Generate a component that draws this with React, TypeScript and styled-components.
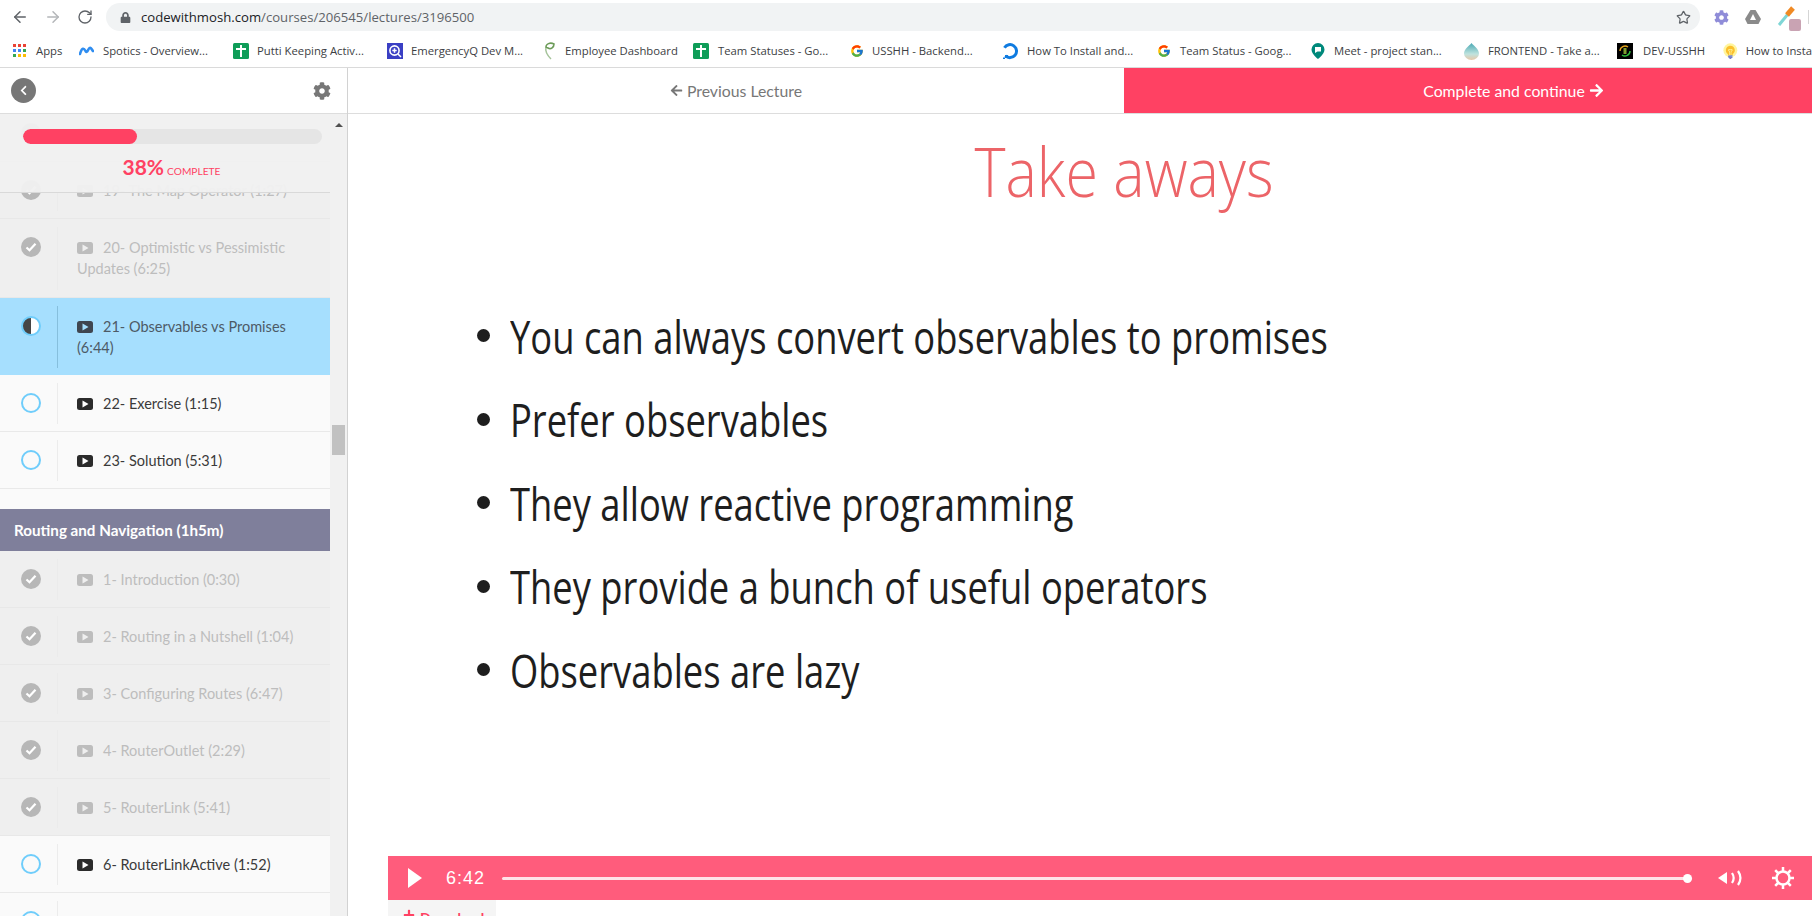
import styled, { createGlobalStyle } from 'styled-components';
import { ArrowLeft, ArrowRight, RotateCw, Star } from 'lucide-react';
import { FaArrowLeft, FaArrowRight, FaChevronLeft, FaCog, FaLock, FaPlus } from 'react-icons/fa';
import { FcGoogle, FcIdea } from 'react-icons/fc';

const GlobalStyle = createGlobalStyle`
  html, body {
    margin: 0;
    padding: 0;
    height: 100%;
    overflow: hidden;
    background: #fff;
  }
  * { box-sizing: border-box; }
`;

const Page = styled.div`
  width: 1812px;
  height: 916px;
  display: flex;
  flex-direction: column;
  overflow: hidden;
  font-family: "Lato", "Open Sans", sans-serif;
`;

/* browser chrome */
const Toolbar = styled.div`
  height: 34px;
  display: flex;
  align-items: center;
  background: #fff;
  flex: none;
`;

const NavIcons = styled.div`
  width: 106px;
  display: flex;
  align-items: center;
  gap: 15px;
  padding-left: 11px;
  color: #5f6368;
  flex: none;
`;

const AddressBar = styled.div`
  width: 1594px;
  height: 28px;
  display: flex;
  align-items: center;
  padding: 0 9px 0 14px;
  background: #f1f3f4;
  border-radius: 14px;
  color: #5f6368;
  flex: none;
`;

const Url = styled.div`
  margin-left: 10px;
  flex: 1;
  font: 13.15px "Open Sans", sans-serif;
  color: #5f6368;
  span { color: #202124; }
`;

const Extensions = styled.div`
  flex: 1;
  display: flex;
  align-items: center;
  gap: 16px;
  padding-left: 14px;
`;

const Eyedropper = styled.div`
  position: relative;
  width: 24px;
  height: 28px;
`;

const Swatch = styled.div`
  position: absolute;
  right: 0;
  bottom: 0;
  width: 12px;
  height: 12px;
  border-radius: 2px;
  background: #c9a3b3;
`;

const Separator = styled.div`
  width: 1px;
  height: 14px;
  margin-left: -9px;
  background: #d5d5d5;
`;

const Bookmarks = styled.div`
  height: 34px;
  display: flex;
  align-items: center;
  padding-left: 13px;
  border-bottom: 1px solid #dadada;
  flex: none;
  overflow: hidden;
`;

const Bookmark = styled.div<{ $w: number; $gap: number }>`
  width: ${p => p.$w}px;
  flex: none;
  display: flex;
  align-items: center;
  gap: ${p => p.$gap}px;
  font: 11.3px "Open Sans", sans-serif;
  color: #3c4043;
  white-space: nowrap;
`;

/* page */
const Body = styled.div`
  flex: 1;
  display: flex;
  min-height: 0;
`;

const Sidebar = styled.aside`
  width: 348px;
  flex: none;
  display: flex;
  flex-direction: column;
  border-right: 1px solid #d2d2d2;
  background: #fff;
`;

const SideHead = styled.div`
  height: 46px;
  flex: none;
  display: flex;
  align-items: center;
  justify-content: space-between;
  padding: 0 16px 0 11px;
  border-bottom: 1px solid #ddd;
  color: #777;
`;

const BackButton = styled.div`
  width: 25px;
  height: 25px;
  border-radius: 50%;
  background: #777;
  color: #fff;
  display: flex;
  align-items: center;
  justify-content: center;
  font-size: 11px;
`;

const ScrollArea = styled.div`
  flex: 1;
  min-height: 0;
  display: flex;
  position: relative;
  overflow: hidden;
`;

const Lessons = styled.div`
  width: 330px;
  flex: none;
  margin-top: -9px;
  background: #fafafa;
`;

const ProgressPanel = styled.div`
  position: absolute;
  top: 0;
  left: 0;
  width: 330px;
  height: 79px;
  padding: 15px 8px 0 23px;
  background: rgba(240, 240, 240, 0.96);
  border-bottom: 1px solid #d9d9d9;
`;

const Track = styled.div`
  height: 15px;
  border-radius: 8px;
  background: #e5e5e5;
  overflow: hidden;
`;

const Fill = styled.div<{ $pct: number }>`
  width: ${p => p.$pct}%;
  height: 100%;
  border-radius: 8px;
  background: #ff4163;
`;

const ProgressLabel = styled.div`
  display: flex;
  align-items: baseline;
  justify-content: center;
  gap: 3px;
  margin-top: 10px;
  padding-right: 2px;
  color: #ff4163;
  font-size: 10.2px;
`;

const Percent = styled.span`
  font-size: 21px;
  font-weight: 700;
`;

const Scrollbar = styled.div`
  flex: 1;
  background: #f1f1f1;
  display: flex;
  flex-direction: column;
  align-items: center;
`;

const ScrollUp = styled.div`
  width: 0;
  height: 0;
  margin-top: 9px;
  border-left: 4px solid transparent;
  border-right: 4px solid transparent;
  border-bottom: 4px solid #505050;
`;

const ScrollThumb = styled.div`
  width: 13px;
  height: 30px;
  margin-top: 298px;
  background: #c1c1c1;
`;

type RowState = 'done' | 'active' | 'todo';

const Row = styled.div<{ $state: RowState; $h: number }>`
  height: ${p => p.$h}px;
  display: flex;
  background: ${p => (p.$state === 'done' ? '#efefef' : p.$state === 'active' ? '#a6dffe' : '#fafafa')};
  border-bottom: ${p => (p.$state === 'active' ? '0' : `1px solid ${p.$state === 'done' ? '#e8e8e8' : '#e9e9e9'}`)};
  color: ${p => (p.$state === 'done' ? '#bdbdbd' : p.$state === 'active' ? '#4d5a66' : '#3a3a3a')};
`;

const StatusCell = styled.div<{ $state: RowState }>`
  width: 58px;
  height: calc(100% - 15px);
  margin-top: 8px;
  flex: none;
  padding: 10px 0 0 21px;
  border-right: 1px solid ${p => (p.$state === 'active' ? '#86bfdd' : p.$state === 'done' ? '#ebebeb' : '#ececec')};
`;

const RingIcon = styled.div`
  width: 20px;
  height: 20px;
  border-radius: 50%;
  border: 2px solid #6fcdfb;
`;

const DoneIcon = styled.div`
  width: 20px;
  height: 20px;
  border-radius: 50%;
  background: #b7b7b7;
  color: #fff;
  display: flex;
  align-items: center;
  justify-content: center;
`;

const HalfIcon = styled.div`
  width: 20px;
  height: 20px;
  border-radius: 50%;
  border: 2px solid #6fcdfb;
  background: linear-gradient(90deg, #454545 50%, #fff 50%);
`;

const LessonTitle = styled.div`
  flex: 1;
  padding: 18px 16px 0 19px;
  font-size: 14.5px;
  line-height: 21px;
`;

const PlayBadge = styled.svg`
  width: 16px;
  height: 12px;
  margin-right: 10px;
  vertical-align: -1px;
`;

const SectionGap = styled.div`
  height: 20px;
  background: #fafafa;
`;

const SectionHead = styled.div`
  height: 42px;
  display: flex;
  align-items: center;
  padding-left: 14px;
  background: #7f7f9b;
  color: #fff;
  font-size: 15.2px;
  font-weight: 700;
`;

const Main = styled.main`
  flex: 1;
  min-width: 0;
  display: flex;
  flex-direction: column;
  overflow: hidden;
`;

const LectureNav = styled.div`
  height: 46px;
  flex: none;
  display: flex;
  border-bottom: 1px solid #ddd;
`;

const PrevLink = styled.div`
  width: 776px;
  flex: none;
  display: flex;
  align-items: center;
  justify-content: center;
  gap: 4px;
  color: #777;
  font-size: 15.8px;
`;

const NextButton = styled.div`
  flex: 1;
  display: flex;
  align-items: center;
  justify-content: center;
  gap: 4px;
  padding-left: 91px;
  background: #ff4163;
  color: #fff;
  font-size: 15.8px;
`;

const Slide = styled.section`
  height: 742px;
  flex: none;
  padding: 21px 0 0 162px;
  overflow: hidden;
`;

const SlideTitle = styled.h1`
  margin: 0;
  padding-left: 28px;
  width: 1200px;
  text-align: center;
  font: 300 68px/72px "Open Sans", sans-serif;
  color: #ec6468;
  transform: scaleX(0.87);
  transform-origin: 614px 0;
`;

const Points = styled.ul`
  list-style: none;
  margin: 87px 0 0 -33px;
  padding: 0;
`;

const Point = styled.li`
  height: 83.5px;
  display: flex;
  align-items: center;
  gap: 20px;
  font: 400 46px/56px "Open Sans", sans-serif;
  color: #1e1e1e;
  white-space: nowrap;
`;

const Dot = styled.span`
  width: 13px;
  height: 13px;
  border-radius: 50%;
  background: #1e1e1e;
  flex: none;
`;

const PointText = styled.span`
  transform: scaleX(0.79);
  transform-origin: 0 50%;
`;

const Player = styled.div`
  height: 44px;
  margin-left: 40px;
  flex: none;
  display: flex;
  align-items: center;
  padding-left: 20px;
  background: #ff5c7c;
  color: #fff;
`;

const Time = styled.div`
  width: 56px;
  margin-left: 24px;
  font: 18px "Liberation Sans", sans-serif;
  letter-spacing: 1px;
  flex: none;
`;

const Scrub = styled.div`
  width: 1190px;
  height: 3px;
  border-radius: 2px;
  background: #ffe3e8;
  position: relative;
  flex: none;
`;

const Knob = styled.div`
  position: absolute;
  right: 0;
  top: -3px;
  width: 9px;
  height: 9px;
  border-radius: 50%;
  background: #fff;
`;

const VolumeIcon = styled.svg`
  width: 26px;
  height: 20px;
  margin-left: 26px;
  flex: none;
`;

const SettingsIcon = styled.svg`
  width: 24px;
  height: 24px;
  margin-left: 27px;
  flex: none;
`;

const Download = styled.div`
  width: 108px;
  height: 30px;
  margin-left: 40px;
  padding: 9px 0 0 15px;
  flex: none;
  display: flex;
  align-items: flex-start;
  gap: 5px;
  background: #f5f5f5;
  color: #ff4163;
  font-size: 14px;
  font-weight: 700;
`;

const GridIcon = () => (
  <svg width="13" height="13" viewBox="0 0 13 13">
    {['#ea4335', '#ea4335', '#ea4335', '#4285f4', '#4285f4', '#34a853', '#34a853', '#fbbc05', '#fbbc05'].map((c, i) => (
      <rect key={i} x={(i % 3) * 5} y={Math.floor(i / 3) * 5} width="3" height="3" fill={c} />
    ))}
  </svg>
);

const SpoticsIcon = () => (
  <svg width="15" height="10" viewBox="0 0 15 10">
    <path d="M1 8 C3 1 5 2 6.500 5 C8 8 9 3 10.500 2 C12 1 13 4 14 5" fill="none" stroke="#2f8df0" strokeWidth="2.600" strokeLinecap="round" />
  </svg>
);

const SheetIcon = () => (
  <svg width="16" height="16" viewBox="0 0 16 16">
    <rect width="16" height="16" rx="1.500" fill="#0f9d58" />
    <path d="M7 2h2v3h4v2H9v7H7V7H3V5h4z" fill="#fff" />
  </svg>
);

const EmergencyIcon = () => (
  <svg width="16" height="16" viewBox="0 0 16 16">
    <rect width="16" height="16" fill="#3a3fc4" />
    <circle cx="7.500" cy="7.500" r="4.600" fill="none" stroke="#fff" strokeWidth="1.600" />
    <path d="M7.500 5.300v4.400M5.300 7.500h4.400M11 11l3 3" stroke="#fff" strokeWidth="1.500" />
  </svg>
);

const SproutIcon = () => (
  <svg width="13" height="18" viewBox="0 0 13 18">
    <path d="M8 17C4 13 2 9 3 5" fill="none" stroke="#a5c39a" strokeWidth="1.500" />
    <path d="M3 5C3 2 7 0 11 2C11 5 8 8 5 6Z" fill="none" stroke="#6d9c59" strokeWidth="1.600" />
  </svg>
);

const CloudIcon = () => (
  <svg width="18" height="18" viewBox="0 0 18 18">
    <path d="M8 15.500A6.500 6.500 0 1 0 2.600 9.500" transform="rotate(35 9 9)" fill="none" stroke="#0f7be0" strokeWidth="3" />
    <path d="M4 13h3v3H4zM2 15.500h2V17H2z" fill="#0f7be0" />
  </svg>
);

const MeetIcon = () => (
  <svg width="14" height="18" viewBox="0 0 14 18">
    <path d="M7 1a6.500 6.500 0 0 1 6.500 6.500C13.500 12 7 17 7 17S.5 12 .5 7.500A6.500 6.500 0 0 1 7 1z" fill="#00897b" />
    <path d="M4 5h6v4.500H6.500L4 11z" fill="#fff" />
  </svg>
);

const DropIcon = () => (
  <svg width="17" height="18" viewBox="0 0 17 18">
    <defs>
      <linearGradient id="dropFill" x1="0" y1="0" x2="0" y2="1">
        <stop offset="0" stopColor="#4aa9b4" />
        <stop offset="0.65" stopColor="#bfe3de" />
        <stop offset="1" stopColor="#e8c7a8" />
      </linearGradient>
    </defs>
    <path d="M8.500 1C11 4 16 7 16 11.500A7.500 6.500 0 0 1 1 11.500C1 7 6 4 8.500 1z" fill="url(#dropFill)" />
  </svg>
);

const DevIcon = () => (
  <svg width="16" height="16" viewBox="0 0 16 16">
    <rect width="16" height="16" fill="#000" />
    <path d="M3 8a5 5 0 0 1 8-4" fill="none" stroke="#e5a21b" strokeWidth="1.400" />
    <path d="M13 8a5 5 0 0 1-8 4" fill="none" stroke="#2fbf3a" strokeWidth="1.400" />
    <rect x="6.500" y="5" width="3" height="6" fill="#7d9c2e" />
  </svg>
);

const bookmarks = [
  { label: 'Apps', icon: <GridIcon />, w: 66, gap: 10 },
  { label: 'Spotics - Overview...', icon: <SpoticsIcon />, w: 154, gap: 9 },
  { label: 'Putti Keeping Activ...', icon: <SheetIcon />, w: 154, gap: 8 },
  { label: 'EmergencyQ Dev M...', icon: <EmergencyIcon />, w: 156, gap: 8 },
  { label: 'Employee Dashboard', icon: <SproutIcon />, w: 150, gap: 9 },
  { label: 'Team Statuses - Go...', icon: <SheetIcon />, w: 157, gap: 9 },
  { label: 'USSHH - Backend...', icon: <FcGoogle size={14} />, w: 151, gap: 8 },
  { label: 'How To Install and...', icon: <CloudIcon />, w: 156, gap: 8 },
  { label: 'Team Status - Goog...', icon: <FcGoogle size={14} />, w: 154, gap: 9 },
  { label: 'Meet - project stan...', icon: <MeetIcon />, w: 152, gap: 9 },
  { label: 'FRONTEND - Take a...', icon: <DropIcon />, w: 154, gap: 8 },
  { label: 'DEV-USSHH', icon: <DevIcon />, w: 105, gap: 10 },
  { label: 'How to Insta', icon: <FcIdea size={18} />, w: 90, gap: 7 },
];

type Lesson = { id: string; title?: string; state: RowState; h?: number };

// row 18 sits behind the progress panel and row 7 starts at the fold: only their icons show
const firstLessons: Lesson[] = [
  { id: 's18', state: 'done' },
  { id: 's19', title: '19- The Map Operator (1:27)', state: 'done' },
  { id: 's20', title: '20- Optimistic vs Pessimistic Updates (6:25)', state: 'done', h: 79 },
  { id: 's21', title: '21- Observables vs Promises (6:44)', state: 'active', h: 77 },
  { id: 's22', title: '22- Exercise (1:15)', state: 'todo' },
  { id: 's23', title: '23- Solution (5:31)', state: 'todo' },
];

const routingLessons: Lesson[] = [
  { id: 'r1', title: '1- Introduction (0:30)', state: 'done' },
  { id: 'r2', title: '2- Routing in a Nutshell (1:04)', state: 'done' },
  { id: 'r3', title: '3- Configuring Routes (6:47)', state: 'done' },
  { id: 'r4', title: '4- RouterOutlet (2:29)', state: 'done' },
  { id: 'r5', title: '5- RouterLink (5:41)', state: 'done' },
  { id: 'r6', title: '6- RouterLinkActive (1:52)', state: 'todo' },
  { id: 'r7', state: 'todo' },
];

const points = [
  'You can always convert observables to promises',
  'Prefer observables',
  'They allow reactive programming',
  'They provide a bunch of useful operators',
  'Observables are lazy',
];

function StatusIcon({ state }: { state: RowState }) {
  if (state === 'active') return <HalfIcon />;
  if (state === 'todo') return <RingIcon />;
  return (
    <DoneIcon>
      <svg width="12" height="10" viewBox="0 0 12 10">
        <path d="M1.500 5.500L4.500 8.300L10.500 1.700" fill="none" stroke="#fff" strokeWidth="2.200" />
      </svg>
    </DoneIcon>
  );
}

function LessonRow({ lesson }: { lesson: Lesson }) {
  const { state } = lesson;
  const badge = state === 'done' ? '#bdbdbd' : state === 'active' ? '#3f4650' : '#2b2b2b';
  const arrow = state === 'done' ? '#efefef' : state === 'active' ? '#a6dffe' : '#fff';
  return (
    <Row $state={state} $h={lesson.h ?? 57}>
      <StatusCell $state={state}>
        <StatusIcon state={state} />
      </StatusCell>
      <LessonTitle>
        <PlayBadge viewBox="0 0 16 12">
          <rect width="16" height="12" rx="2.500" fill={badge} />
          <path d="M5.500 2.500L11.500 6L5.500 9.500z" fill={arrow} />
        </PlayBadge>
        {lesson.title}
      </LessonTitle>
    </Row>
  );
}

function App() {
  return (
    <Page>
      <GlobalStyle />
      <Toolbar>
        <NavIcons>
          <ArrowLeft size={18} />
          <ArrowRight size={18} color="#b4b6b9" />
          <RotateCw size={16} />
        </NavIcons>
        <AddressBar>
          <FaLock size={11} />
          <Url><span>codewithmosh.com</span>/courses/206545/lectures/3196500</Url>
          <Star size={15} />
        </AddressBar>
        <Extensions>
          <FaCog size={15} color="#8f8cd8" />
          <svg width="16" height="14" viewBox="0 0 16 14">
            <path d="M5.500 0h5L16 9l-2.500 5h-11L0 9z" fill="#8a8a8a" />
            <path d="M8 4l-3 6h6z" fill="#fff" />
          </svg>
          <Eyedropper>
            <svg width="20" height="24" viewBox="0 0 20 24">
              <path d="M2 22L11 11" stroke="#7fd6d6" strokeWidth="3" />
              <path d="M10 12L16 5" stroke="#f08a24" strokeWidth="5" />
            </svg>
            <Swatch />
          </Eyedropper>
          <Separator />
        </Extensions>
      </Toolbar>
      <Bookmarks>
        {bookmarks.map(b => (
          <Bookmark key={b.label} $w={b.w} $gap={b.gap}>
            {b.icon}
            {b.label}
          </Bookmark>
        ))}
      </Bookmarks>
      <Body>
        <Sidebar>
          <SideHead>
            <BackButton><FaChevronLeft /></BackButton>
            <FaCog size={18} />
          </SideHead>
          <ScrollArea>
            <Lessons>
              {firstLessons.map(l => <LessonRow key={l.id} lesson={l} />)}
              <SectionGap />
              <SectionHead>Routing and Navigation (1h5m)</SectionHead>
              {routingLessons.map(l => <LessonRow key={l.id} lesson={l} />)}
            </Lessons>
            <ProgressPanel>
              <Track><Fill $pct={38} /></Track>
              <ProgressLabel><Percent>38%</Percent> COMPLETE</ProgressLabel>
            </ProgressPanel>
            <Scrollbar>
              <ScrollUp />
              <ScrollThumb />
            </Scrollbar>
          </ScrollArea>
        </Sidebar>
        <Main>
          <LectureNav>
            <PrevLink><FaArrowLeft size={13} /> Previous Lecture</PrevLink>
            <NextButton>Complete and continue <FaArrowRight size={15} /></NextButton>
          </LectureNav>
          <Slide>
            <SlideTitle>Take aways</SlideTitle>
            <Points>
              {points.map(p => (
                <Point key={p}>
                  <Dot />
                  <PointText>{p}</PointText>
                </Point>
              ))}
            </Points>
          </Slide>
          <Player>
            <svg width="14" height="20" viewBox="0 0 14 20">
              <path d="M0 0L14 10L0 20z" fill="#fff" />
            </svg>
            <Time>6:42</Time>
            <Scrub><Knob /></Scrub>
            <VolumeIcon viewBox="0 0 26 20">
              <path d="M0 10L9 4V16z" fill="#fff" />
              <path d="M14 5C16 8 16 12 14 15M20 3C23.500 8 23.500 12 20 17" fill="none" stroke="#fff" strokeWidth="2.200" />
            </VolumeIcon>
            <SettingsIcon viewBox="0 0 24 24">
              <circle cx="12" cy="12" r="6.500" fill="none" stroke="#fff" strokeWidth="2.500" />
              <path d="M12 1v4M12 19v4M1 12h4M19 12h4M4.200 4.200l2.800 2.800M17 17l2.800 2.800M4.200 19.800L7 17M17 7l2.800-2.800" stroke="#fff" strokeWidth="2.500" />
            </SettingsIcon>
          </Player>
          <Download><FaPlus size={12} /> Download</Download>
        </Main>
      </Body>
    </Page>
  );
}

export default App;
